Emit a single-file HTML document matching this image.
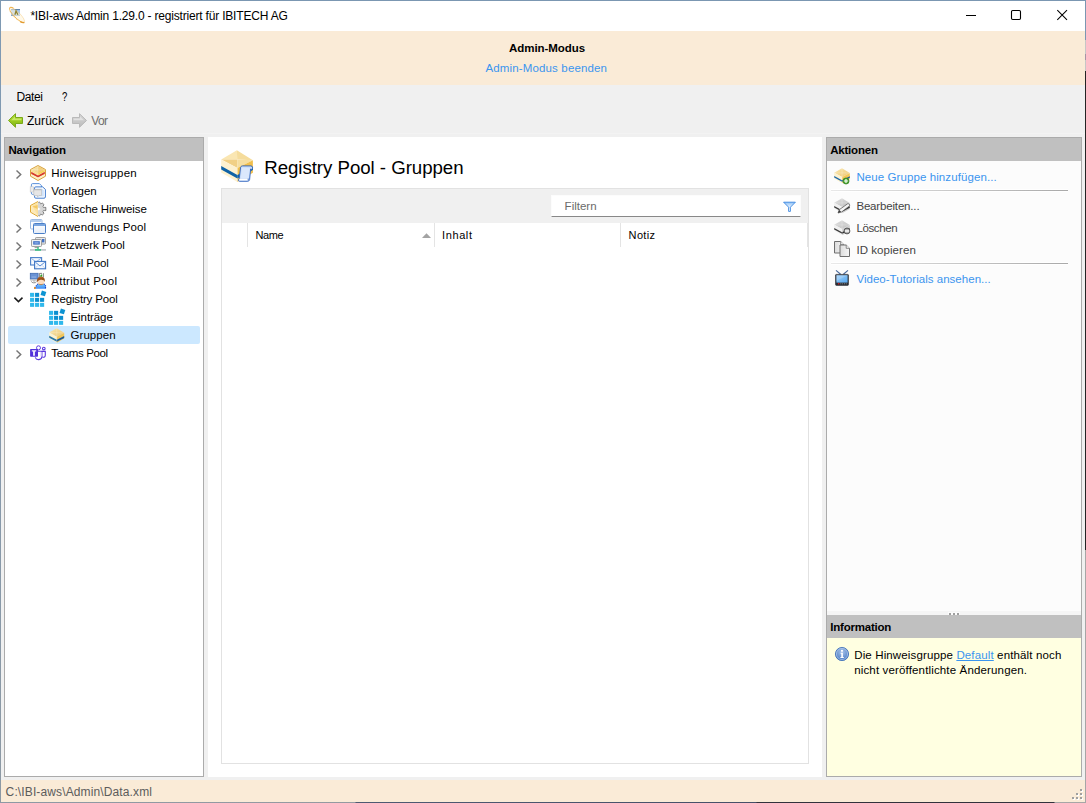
<!DOCTYPE html>
<html lang="de"><head><meta charset="utf-8"><title>IBI-aws Admin</title>
<style>
*{box-sizing:border-box;margin:0;padding:0}
html,body{width:1086px;height:803px;overflow:hidden;background:#f0f0f0}
body{font-family:"Liberation Sans",sans-serif;font-size:12px;color:#000;position:relative}
.abs{position:absolute}
.t{position:absolute;white-space:nowrap;line-height:14px;height:14px}
svg{position:absolute;overflow:visible}
.ph{position:absolute;height:23px;background:#c0c0c0}
</style></head><body>
<!-- window frame -->
<div class="abs" style="left:0;top:0;width:1086px;height:803px;background:#f0f0f0"></div>
<div class="abs" style="left:0;top:0;width:1086px;height:1px;background:#7b97b2"></div>
<div class="abs" style="left:0;top:0;width:1px;height:803px;background:linear-gradient(#7e99b3,#8799ab 60%,#8d99a4)"></div>
<div class="abs" style="left:1085px;top:0;width:1px;height:803px;background:linear-gradient(#7b97b2 0,#7b97b2 40px,#c6c6c6 40px,#c6c6c6 54px,#a694a6 54px,#a694a6 60px,#c6c6c6 60px,#c6c6c6 71px,#242424 71px,#242424 550px,#a6a6a6 550px)"></div>
<div class="abs" style="left:0;top:802px;width:1086px;height:1px;background:linear-gradient(90deg,#8d99a4 0,#949aa0 355px,#4e5a72 356px,#465068 756px,#32323c 757px,#32323c 1054px,#a6a6a6 1055px)"></div>
<!-- title bar -->
<div class="abs" style="left:1px;top:1px;width:1084px;height:30px;background:#fff"></div>
<svg width="0" height="0" style="left:0;top:0"><defs>
<linearGradient id="gTop" x1="0" y1="0" x2="1" y2="1"><stop offset="0" stop-color="#f9e6ae"/><stop offset="1" stop-color="#eec976"/></linearGradient>
<linearGradient id="gTopG" x1="0" y1="0" x2="1" y2="1"><stop offset="0" stop-color="#e0e0e0"/><stop offset="1" stop-color="#bebebe"/></linearGradient>
<linearGradient id="gGr" x1="0" y1="0" x2="0" y2="1"><stop offset="0" stop-color="#b4de3c"/><stop offset=".5" stop-color="#9ccc20"/><stop offset="1" stop-color="#7fb414"/></linearGradient>
<linearGradient id="gGy" x1="0" y1="0" x2="0" y2="1"><stop offset="0" stop-color="#d6d6d6"/><stop offset="1" stop-color="#bcbcbc"/></linearGradient>
<linearGradient id="gWin" x1="0" y1="0" x2="0" y2="1"><stop offset="0" stop-color="#ffffff"/><stop offset="1" stop-color="#e4ecf8"/></linearGradient>
<linearGradient id="gDoc" x1="0" y1="0" x2="1" y2="0"><stop offset="0" stop-color="#dcdcdc"/><stop offset="1" stop-color="#f6f6f6"/></linearGradient>
<radialGradient id="gInf" cx=".5" cy=".35" r=".7"><stop offset="0" stop-color="#a9c4ea"/><stop offset="1" stop-color="#3f74c0"/></radialGradient>
<linearGradient id="gTv" x1="0" y1="0" x2="1" y2="1"><stop offset="0" stop-color="#9fd0fb"/><stop offset="1" stop-color="#56a8f0"/></linearGradient>
</defs></svg><svg style="left:8px;top:6px" width="18" height="18" viewBox="0 0 18 18"><rect x="3" y="3" width="9" height="7" fill="#a8c9ee"/><rect x="3" y="3" width="9" height="1.1" fill="#5f86ae"/><rect x="3" y="9.2" width="9" height=".8" fill="#7fa6d0"/><g transform="rotate(45 9 9)"><ellipse cx="9" cy="9" rx="10.2" ry="3" fill="#fff4d8" fill-opacity=".55"/><ellipse cx="9" cy="9" rx="10.2" ry="3" fill="none" stroke="#f0b44c" stroke-width=".8" stroke-opacity=".4"/><path d="M-1.2 9A10.2 3 0 0 0 19.2 9" fill="none" stroke="#efb048" stroke-width="1" stroke-dasharray="1.1 .5"/><path d="M-1.2 9A10.2 3 0 0 1 2 6.7" fill="none" stroke="#efb048" stroke-width="1"/><path d="M19.2 9A10.2 3 0 0 1 16 11.3" fill="none" stroke="#e09a30" stroke-width="1.4"/></g><path d="M6.9 8.8L8 5L9.9 8.8" stroke="#85720f" stroke-opacity=".85" stroke-width="1.3" fill="none"/></svg>
<svg style="left:966px;top:10px" width="102" height="11" viewBox="0 0 102 11"><path d="M0 5.5h10" stroke="#000" stroke-width="1"/><rect x="45.5" y="0.5" width="9" height="9" rx="1.2" fill="none" stroke="#000" stroke-width="1.1"/><path d="M91.3 0.2l9.7 9.7M101 0.2l-9.7 9.7" stroke="#000" stroke-width="1.05"/></svg>
<!-- banner -->
<div class="abs" style="left:1px;top:31px;width:1084px;height:54px;background:#faebd7"></div>
<div class="abs" style="left:1px;top:133px;width:1084px;height:1px;background:#f3f3f3"></div>
<!-- toolbar arrows -->
<svg style="left:8px;top:113px" width="15" height="15" viewBox="0 0 15 15"><path d="M0.5 7.5L7.5 0.7V4.5H14.5V10.5H7.5V14.3Z" fill="url(#gGr)" stroke="#7aa81a" stroke-width="1" stroke-linejoin="round"/><path d="M3 7.2L7 3.6V5.6H13.4V7.2Z" fill="#d6f07a" fill-opacity=".75"/></svg><svg style="left:72px;top:113px" width="15" height="15" viewBox="0 0 15 15"><path d="M14.5 7.5L7.5 0.7V4.5H0.5V10.5H7.5V14.3Z" fill="url(#gGy)" stroke="#b9b9b9" stroke-width="1" stroke-linejoin="round"/><path d="M12 7.2L8 3.6V5.6H1.6V7.2Z" fill="#e6e6e6" fill-opacity=".8"/></svg>
<!-- nav panel -->
<div class="abs" style="left:4px;top:137px;width:200px;height:640px;border:1px solid #ababab;background:#fff"></div>
<div class="ph" style="left:5px;top:138px;width:198px"></div>
<div class="abs" style="left:8px;top:326px;width:192px;height:18px;background:#cce8ff;border-radius:2px"></div>
<svg style="left:16px;top:169px" width="6" height="10" viewBox="0 0 6 10"><path d="M0.5 1.5L4.7 5.5L0.5 9.5" fill="none" stroke="#757575" stroke-width="1.45"/></svg>
<svg style="left:16px;top:223px" width="6" height="10" viewBox="0 0 6 10"><path d="M0.5 1.5L4.7 5.5L0.5 9.5" fill="none" stroke="#757575" stroke-width="1.45"/></svg>
<svg style="left:16px;top:241px" width="6" height="10" viewBox="0 0 6 10"><path d="M0.5 1.5L4.7 5.5L0.5 9.5" fill="none" stroke="#757575" stroke-width="1.45"/></svg>
<svg style="left:16px;top:259px" width="6" height="10" viewBox="0 0 6 10"><path d="M0.5 1.5L4.7 5.5L0.5 9.5" fill="none" stroke="#757575" stroke-width="1.45"/></svg>
<svg style="left:16px;top:277px" width="6" height="10" viewBox="0 0 6 10"><path d="M0.5 1.5L4.7 5.5L0.5 9.5" fill="none" stroke="#757575" stroke-width="1.45"/></svg>
<svg style="left:16px;top:349px" width="6" height="10" viewBox="0 0 6 10"><path d="M0.5 1.5L4.7 5.5L0.5 9.5" fill="none" stroke="#757575" stroke-width="1.45"/></svg>
<svg style="left:14px;top:296px" width="10" height="6" viewBox="0 0 10 6"><path d="M0.4 1.6L4.45 5.6L8.5 1.6" fill="none" stroke="#1c1c1c" stroke-width="1.5"/></svg>
<svg style="left:30px;top:165px" width="16" height="16" viewBox="0 0 16 16"><path d="M8 0.5L15.5 4.5V11.2L8 15.5L0.5 11.2V4.5Z" fill="#fdf3d2"/><path d="M8 1.2L14.8 4.8L8 8.4L1.2 4.8Z" fill="url(#gTop)"/><path d="M1.2 4.8L8 8.4V10L1.2 6.6Z" fill="#fae08e"/><path d="M14.8 4.8L8 8.4V10L14.8 6.6Z" fill="#f7d24e"/><path d="M1.2 6.8L8 10.4L14.8 6.8V9L8 12.6L1.2 9Z" fill="#d63b2a"/><path d="M1.2 9.2L8 12.8L14.8 9.2V11L8 14.8L1.2 11Z" fill="#fdf0c4"/><path d="M8 1.2V8.4M1.2 4.8H14.8" stroke="#fff" stroke-opacity=".4" stroke-width=".7"/><path d="M8 1.2L14.8 4.8L8 8.4Z" fill="#f0b030" fill-opacity=".25"/><path d="M8 0.5L15.5 4.5V11.2L8 15.5L0.5 11.2V4.5Z" fill="none" stroke="#d8a33e" stroke-width="1"/></svg>
<svg style="left:30px;top:183px" width="16" height="16" viewBox="0 0 16 16"><path d="M2.6 0.6H9.4L11.6 2.8V11.4H2.6C1.8 11.4 1.4 11 1.4 10.2V1.8C1.4 1 1.8 0.6 2.6 0.6Z" fill="#f8fbff" stroke="#4a86d6" stroke-width=".9"/><path d="M5.6 3.9H12.6L15.4 6.4V14C15.4 14.8 14.8 15.2 14 15.2H5.8C5 15.2 4.6 14.8 4.6 14V5C4.6 4.2 5 3.9 5.6 3.9Z" fill="#fdfeff" stroke="#3a76cc" stroke-width=".95"/><path d="M6.4 5.6H12L13.8 7.2V13.6H6.4Z" fill="#cfe3fb"/><rect x="0.2" y="3.8" width="3.4" height="5.2" fill="#ececec" stroke="#c6c6c6" stroke-width=".6"/><path d="M3.7 6.6H11.5V12.5H8.8L7.5 14.2V12.5H3.7Z" fill="#e6e6e6" stroke="#bcbcbc" stroke-width=".6"/><path d="M3.7 6.7H11.5" stroke="#b0b0b0" stroke-width=".7"/></svg>
<svg style="left:30px;top:201px" width="16" height="16" viewBox="0 0 16 16"><g fill="#d0d0d0" stroke="#5c5c5c" stroke-width=".8" stroke-linejoin="round"><path d="M8 1.6L9.6 1L10.4 3.2L12.2 2L14 3.6L12.8 5.6C13 6 13.2 6.2 13.2 6.4H15.8V9.6H13.2C13.2 9.8 13 10 12.8 10.4L14 12.4L12.2 14L10.4 12.8L9.6 15L8 14.4Z"/></g><path d="M8 1.6L9.4 1.2L10.2 3.6L12 2.4L13.4 3.6L12.2 5.8L12.8 6.8H15.2V9.2H12.8L12.2 10.2L13.4 12.4L12 13.6L10.2 12.4L9.4 14.8L8 14.4Z" fill="#d6d6d6"/><path d="M8 6.4L10.6 8L8 9.6Z" fill="#fff"/><path d="M8 0.5V15.5L0.5 11.2V4.5Z" fill="#fdf0c8"/><path d="M8 0.5L0.5 4.5V11.2L8 15.5" fill="none" stroke="#dfa832" stroke-width="1" stroke-linejoin="round"/><path d="M7.6 1.6V8.4L1.6 5Z" fill="#fbe2a0"/><path d="M7.6 4V14L2.6 5.4Z" fill="#f3c458" fill-opacity=".85"/><path d="M7.6 8V14.6L1.4 11V5.2Z" fill="#fce8b4" fill-opacity=".75"/></svg>
<svg style="left:30px;top:219px" width="16" height="16" viewBox="0 0 16 16"><rect x="0.5" y="0.5" width="11.5" height="9.5" rx="1" fill="#fbfcfe" stroke="#9dbbe2"/><rect x="1" y="1" width="10.5" height="2" fill="#b4cdee"/><rect x="3.5" y="4.5" width="12" height="10" rx="1" fill="url(#gWin)" stroke="#4a7fc8"/><rect x="4" y="5" width="11" height="2" fill="#7aa6e0"/></svg>
<svg style="left:30px;top:237px" width="16" height="16" viewBox="0 0 16 16"><rect x="5.5" y="0.5" width="10" height="6.6" rx=".8" fill="#e8e8e8" stroke="#8c8c8c" stroke-width=".8"/><rect x="12" y="2" width="2.4" height="3.4" fill="#3f6fc4"/><rect x="1.5" y="2.5" width="10" height="7" rx=".8" fill="#f2f2f2" stroke="#8c8c8c" stroke-width=".8"/><rect x="3.2" y="4.2" width="6.6" height="3.4" fill="#3f6fc4"/><rect x="4.4" y="5" width="4.2" height="1.8" fill="#7ea0e0"/><path d="M4.6 10.6H8.6" stroke="#9a9a9a" stroke-width="1"/><rect x="0" y="12" width="16" height="1.8" fill="#c4c8cc"/><rect x="5" y="12" width="6" height="1.8" fill="#3fbf86"/><path d="M8 10V12" stroke="#3fbf86" stroke-width="1.4"/></svg>
<svg style="left:30px;top:255px" width="16" height="16" viewBox="0 0 16 16"><rect x="0.6" y="2.6" width="11" height="7.4" fill="#f6f9fe" stroke="#4a7fc8" stroke-width="1.1"/><path d="M1.4 3.4L6 7L10.8 3.4" fill="none" stroke="#7fa6de" stroke-width=".9"/><rect x="4.6" y="6.4" width="11" height="7.4" fill="#f6f9fe" stroke="#3f76c4" stroke-width="1.1"/><path d="M5.4 7.2L10 11L14.8 7.2" fill="none" stroke="#5b8ed6" stroke-width="1"/><path d="M5.4 13L8 10.4M14.8 13L12.2 10.4" stroke="#a9c4ea" stroke-width=".7"/></svg>
<svg style="left:30px;top:273px" width="16" height="16" viewBox="0 0 16 16"><rect x="0.3" y="0.3" width="7.8" height="5.8" fill="#6a92d4" stroke="#3f6ab0" stroke-width=".8"/><rect x="1.6" y="3.7" width="4.6" height=".7" fill="#a9c2ea"/><rect x="0.2" y="6.5" width="7" height="1.3" fill="#cfcfcf"/><path d="M1.4 8.4C1.4 10.2 6 10.4 6.6 8.6" fill="none" stroke="#8c8c8c" stroke-width="1"/><path d="M3 8H5.4" stroke="#b0b0b0" stroke-width="1"/><path d="M9.6 0.2V4.4M13.4 0.2V4.4M9.6 0.4H12" stroke="#7a7a7a" stroke-width=".9" fill="none"/><path d="M10.5 3.6V2.6L12 1.6V3.6Z" fill="#2aa02a" stroke="#2aa02a" stroke-width=".5"/><defs><linearGradient id="gBody" x1="0" y1="0" x2="0" y2="1"><stop offset="0" stop-color="#76c6ff"/><stop offset="1" stop-color="#3c8af4"/></linearGradient></defs><path d="M7.6 11L5.4 14V15.8H16V13.2L14.2 11Z" fill="url(#gBody)"/><path d="M7.8 10.8L5.2 14.2V15.8M14 10.8L15.5 12.8V15.8" fill="none" stroke="#1c40c4" stroke-width="1.2" stroke-dasharray="1.1 .8"/><ellipse cx="10.9" cy="8.7" rx="3.2" ry="2.9" fill="#fbdcc0"/><path d="M7.2 9.4C6.4 5 8.6 3.7 11 3.7S15.6 5 14.6 9.4C14.4 7.4 13.4 6.8 12.2 7C10.6 6.2 8 7 7.2 9.4Z" fill="#9a521a"/><path d="M8 5.2C9.4 3.8 12.6 3.8 14 5.2C12.4 4.8 9.6 4.8 8 5.2Z" fill="#b8682a"/><path d="M8.6 10.8C9.8 12 12.2 12 13.4 10.8" fill="none" stroke="#b87840" stroke-width=".9"/><rect x="4" y="13.9" width="1.7" height="2" rx=".4" fill="#ea8a1e"/></svg>
<svg style="left:30px;top:291px" width="16" height="16" viewBox="0 0 16 16"><rect x="0.05" y="1.85" width="4.1" height="4.0" fill="#2fb8ec"/><rect x="5.05" y="1.85" width="4.1" height="4.0" fill="#0a8fd0"/><rect x="0.05" y="6.85" width="4.1" height="4.0" fill="#2fb8ec"/><rect x="5.05" y="6.85" width="4.1" height="4.0" fill="#0a8fd0"/><rect x="10.05" y="6.85" width="4.1" height="4.0" fill="#0a8fd0"/><rect x="0.05" y="11.85" width="4.1" height="4.0" fill="#2fb8ec"/><rect x="5.05" y="11.85" width="4.1" height="4.0" fill="#2fb8ec"/><rect x="10.05" y="11.85" width="4.1" height="4.0" fill="#2fb8ec"/><rect x="11.1" y="0.1" width="4.6" height="4.6" fill="#0c93d2" transform="rotate(18 13.4 2.4)"/></svg>
<svg style="left:49px;top:309px" width="16" height="16" viewBox="0 0 16 16"><rect x="0.05" y="1.85" width="4.1" height="4.0" fill="#2fb8ec"/><rect x="5.05" y="1.85" width="4.1" height="4.0" fill="#0a8fd0"/><rect x="0.05" y="6.85" width="4.1" height="4.0" fill="#2fb8ec"/><rect x="5.05" y="6.85" width="4.1" height="4.0" fill="#0a8fd0"/><rect x="10.05" y="6.85" width="4.1" height="4.0" fill="#0a8fd0"/><rect x="0.05" y="11.85" width="4.1" height="4.0" fill="#2fb8ec"/><rect x="5.05" y="11.85" width="4.1" height="4.0" fill="#2fb8ec"/><rect x="10.05" y="11.85" width="4.1" height="4.0" fill="#2fb8ec"/><rect x="11.1" y="0.1" width="4.6" height="4.6" fill="#0c93d2" transform="rotate(18 13.4 2.4)"/></svg>
<svg style="left:48.8px;top:327.7px" width="15.4" height="15.4" viewBox="0 0 16 16"><path d="M8 0.2L15.8 5L8.1 9L0.2 4.8Z" fill="url(#gTop)"/><path d="M0.2 4.8L8.1 9V15.3L0.2 10.6Z" fill="#fdf2d0"/><path d="M15.8 5L8.1 9V15.3L15.8 10.9Z" fill="#f2c658"/><path d="M0.2 8.1L8.1 12.2V14.299999999999999L0.2 10.1Z" fill="#2a78a8"/><path d="M15.8 8.3L8.1 12.2V14.299999999999999L15.8 10.3Z" fill="#185a9a"/><path d="M8 0.2L8.1 9M0.2 4.8L15.8 5" stroke="#fff" stroke-opacity=".3" stroke-width=".7"/><path d="M8.1 9V15.3" stroke="#fff" stroke-opacity=".35" stroke-width=".6"/></svg>
<svg style="left:30px;top:345px" width="16" height="16" viewBox="0 0 16 16"><circle cx="8.5" cy="2.8" r="2" fill="#fff" stroke="#5a38de" stroke-width=".95"/><circle cx="13.8" cy="3.5" r="1.35" fill="#fff" stroke="#5a38de" stroke-width="1.05"/><path d="M12 6.4H15.3V10.2C15.3 12.6 12.8 12.6 12.4 11.8" fill="none" stroke="#5a38de" stroke-width="1.1"/><path d="M8 6.3H11.9V11.6C11.9 15.4 6.2 15.6 5.3 12.4" fill="#fff" stroke="#5a38de" stroke-width="1.1"/><path d="M11.2 7V11.4" stroke="#cfc6f6" stroke-width="1.2"/><rect x="0.1" y="4.1" width="7.9" height="7.7" rx=".7" fill="#5230da"/><path d="M1.8 5.2H6.2V6.5H4.9V10.7H3.1V6.5H1.8Z" fill="#f4f2fd"/></svg>
<!-- center -->
<div class="abs" style="left:208px;top:137px;width:614px;height:640px;background:#fff"></div>
<svg style="left:221px;top:150px" width="32" height="32" viewBox="0 0 32 32"><path d="M15.9 0.2L0.2 9.45L16.2 9.6Z" fill="#fae6b2"/><path d="M15.9 0.2L31.9 10.2L16.2 9.6Z" fill="#f5dc9c"/><path d="M0.2 9.45L16.4 17.9L16.2 9.6Z" fill="#f1d086"/><path d="M31.9 10.2L16.4 17.9L16.2 9.6Z" fill="#f6dea0"/><path d="M0.2 9.45L16.4 17.9V31.9L0.2 22.6Z" fill="#fdf1d0"/><path d="M31.9 10.2L16.4 17.9V31.9L31.9 22.8Z" fill="#f1bf4c"/><path d="M0.2 15.9L16.4 24.9L31.9 16.6V20L16.4 28.4L0.2 19.4Z" fill="#0f62a6"/><path d="M16.4 17.9V31.9" stroke="#fff" stroke-opacity=".25" stroke-width=".8"/><path d="M19.6 17.2C20 16.2 21 15.9 22 15.9H30C31.6 16 32.2 18.4 30.6 19.4L29.6 19L28.6 29.6C28.4 30.8 27.4 31.3 26.8 31.3H18.4C17 31 17 29.4 18.2 28.8Z" fill="#c6dbf8" stroke="#2f62bc" stroke-width=".9"/><path d="M20.8 17.6L28.8 17.8L27.6 28.4H19.8Z" fill="#dbe8fc"/><path d="M18.6 29.6H27" stroke="#fff" stroke-width="1.5"/><path d="M27.2 28.6V30.6" stroke="#2f62bc" stroke-width=".8"/></svg>
<div class="abs" style="left:221px;top:188px;width:588px;height:576px;border:1px solid #e2e2e2;background:#fff"></div>
<div class="abs" style="left:222px;top:189px;width:586px;height:34px;background:#f0f0f0"></div>
<div class="abs" style="left:551px;top:195px;width:250px;height:22px;background:#fff;border:1px solid #fcfcfc;border-bottom:1px solid #888888;border-radius:1px"></div>
<svg style="left:783px;top:201.4px" width="13" height="11" viewBox="0 0 13 11"><defs><linearGradient id="gFu" x1="0" y1="0" x2="0" y2="1"><stop offset="0" stop-color="#8cc0f6"/><stop offset=".45" stop-color="#dcecfd"/><stop offset="1" stop-color="#ffffff"/></linearGradient></defs><path d="M0.6 1.2h11.8l-5 5v4.2h-1.8v-4.2z" fill="url(#gFu)" stroke="#3a86e0" stroke-width=".9" stroke-linejoin="round"/></svg>
<div class="abs" style="left:247px;top:223px;width:1px;height:24px;background:#e4e4e4"></div>
<div class="abs" style="left:434px;top:223px;width:1px;height:24px;background:#e4e4e4"></div>
<div class="abs" style="left:620px;top:223px;width:1px;height:24px;background:#e4e4e4"></div>
<div class="abs" style="left:807px;top:223px;width:1px;height:24px;background:#e4e4e4"></div>
<svg style="left:422px;top:233px" width="9" height="5" viewBox="0 0 9 5"><path d="M0 5L4.5 0.3L9 5z" fill="#a3a3a3"/></svg>
<!-- right panel -->
<div class="abs" style="left:826px;top:137px;width:256px;height:640px;border:1px solid #ababab;background:#f0f0f0"></div>
<div class="ph" style="left:827px;top:138px;width:254px"></div>
<div class="abs" style="left:827px;top:161px;width:254px;height:450px;background:#fcfcfc"></div>
<div class="abs" style="left:831px;top:189px;width:237px;height:3px;background:#fff"></div><div class="abs" style="left:831px;top:190px;width:237px;height:1px;background:linear-gradient(90deg,#e9e9e9,#a9a9a9)"></div>
<div class="abs" style="left:831px;top:262px;width:237px;height:3px;background:#fff"></div><div class="abs" style="left:831px;top:263px;width:237px;height:1px;background:linear-gradient(90deg,#e9e9e9,#a9a9a9)"></div>
<div class="abs" style="left:827px;top:611px;width:254px;height:4px;background:#f5f5f5"></div><div class="abs" style="left:948px;top:612px;width:12px;height:3px;background:#fcfcfc"></div><div class="abs" style="left:949px;top:613px;width:2px;height:2px;background:#a0a0a0;box-shadow:4px 0 #a0a0a0,8px 0 #a0a0a0"></div>
<div class="ph" style="left:827px;top:615px;width:254px"></div>
<div class="abs" style="left:827px;top:638px;width:254px;height:138px;background:#ffffe1"></div>
<svg style="left:834px;top:168.2px" width="16" height="16" viewBox="0 0 16 16"><path d="M8 0.2L15.8 5L8.1 9L0.2 4.8Z" fill="url(#gTop)"/><path d="M0.2 4.8L8.1 9V15.3L0.2 10.6Z" fill="#fdf2d0"/><path d="M15.8 5L8.1 9V15.3L15.8 10.9Z" fill="#f2c658"/><path d="M0.2 8.1L8.1 12.2V13.7L0.2 9.5Z" fill="#1c66a8"/><path d="M15.8 8.3L8.1 12.2V13.7L15.8 9.700000000000001Z" fill="#185a9a"/><path d="M8 0.2L8.1 9M0.2 4.8L15.8 5" stroke="#fff" stroke-opacity=".3" stroke-width=".7"/><path d="M8.1 9V15.3" stroke="#fff" stroke-opacity=".35" stroke-width=".6"/></svg>
<svg style="left:842px;top:177px" width="8" height="8" viewBox="0 0 8 8"><circle cx="4" cy="4" r="3.05" fill="#4aa62e" stroke="#2f7c1c" stroke-width=".7"/><path d="M4 1.9V6.1M1.9 4H6.1" stroke="#fff" stroke-width="1.15"/></svg>
<svg style="left:834px;top:197.6px" width="16" height="16" viewBox="0 0 16 16"><path d="M8 0.2L15.8 5L8.1 9L0.2 4.8Z" fill="url(#gTopG)"/><path d="M0.2 4.8L8.1 9V15.3L0.2 10.6Z" fill="#f0f0f0"/><path d="M15.8 5L8.1 9V15.3L15.8 10.9Z" fill="#cdcdcd"/><path d="M0.2 8.1L8.1 12.2V13.7L0.2 9.5Z" fill="#3c3c3c"/><path d="M15.8 8.3L8.1 12.2V13.7L15.8 9.700000000000001Z" fill="#2c2c2c"/><path d="M8 0.2L8.1 9M0.2 4.8L15.8 5" stroke="#fff" stroke-opacity=".3" stroke-width=".7"/><path d="M8.1 9V15.3" stroke="#fff" stroke-opacity=".35" stroke-width=".6"/></svg>
<svg style="left:837px;top:203px" width="14" height="11" viewBox="0 0 14 11"><path d="M1 10L2.4 6.6L10.6 0.8C11.6 0.2 13.4 1.8 12.6 2.8L4.6 9Z" fill="#f4f4f4" stroke="#5a5a5a" stroke-width=".8" stroke-linejoin="round"/><path d="M1 10L2.2 7L4.2 8.8Z" fill="#3a3a3a"/></svg>
<svg style="left:834px;top:219.6px" width="16" height="16" viewBox="0 0 16 16"><path d="M8 0.2L15.8 5L8.1 9L0.2 4.8Z" fill="url(#gTopG)"/><path d="M0.2 4.8L8.1 9V15.3L0.2 10.6Z" fill="#f0f0f0"/><path d="M15.8 5L8.1 9V15.3L15.8 10.9Z" fill="#cdcdcd"/><path d="M0.2 8.1L8.1 12.2V13.7L0.2 9.5Z" fill="#3c3c3c"/><path d="M15.8 8.3L8.1 12.2V13.7L15.8 9.700000000000001Z" fill="#2c2c2c"/><path d="M8 0.2L8.1 9M0.2 4.8L15.8 5" stroke="#fff" stroke-opacity=".3" stroke-width=".7"/><path d="M8.1 9V15.3" stroke="#fff" stroke-opacity=".35" stroke-width=".6"/></svg>
<svg style="left:842.6px;top:227.4px" width="8" height="8" viewBox="0 0 8 8"><circle cx="4" cy="4" r="2.9" fill="#b4b4b4" stroke="#474747" stroke-width=".9"/><rect x="1.9" y="3.3" width="4.2" height="1.4" fill="#fff"/></svg>
<svg style="left:834px;top:241px" width="16" height="16" viewBox="0 0 16 16"><path d="M0.5 0.5h6.2l3.3 3.3v8.2h-9.5z" fill="url(#gDoc)" stroke="#6e6e6e" stroke-width="1" stroke-linejoin="round"/><path d="M6.7 0.5v3.3h3.3" fill="#f8f8f8" stroke="#6e6e6e" stroke-width=".8"/><path d="M6 4h6.2l3.3 3.3v8.2h-9.5z" fill="url(#gDoc)" stroke="#6e6e6e" stroke-width="1" stroke-linejoin="round"/><path d="M12.2 4v3.3h3.3" fill="#f8f8f8" stroke="#6e6e6e" stroke-width=".8"/></svg>
<svg style="left:835px;top:270px" width="14" height="16" viewBox="0 0 14 16"><path d="M1 0.4L5.6 4.2M13 0.4L8.4 4.2" stroke="#4a6a9c" stroke-width="1.2"/><rect x="0.5" y="4.4" width="13" height="11" rx=".8" fill="#2a2e36" stroke="#2a2e36" stroke-width=".6"/><rect x="1.4" y="5.2" width="11.2" height="7.4" fill="url(#gTv)"/><path d="M1.4 5.2H12.6L1.4 11Z" fill="#fff" fill-opacity=".18"/><rect x="3" y="13.2" width="1.4" height="1.2" fill="#f01818"/><path d="M5.4 13.8H12" stroke="#9a9a9a" stroke-width=".9" stroke-dasharray=".9 .9"/></svg>
<svg style="left:835px;top:647px" width="14" height="14" viewBox="0 0 14 14"><circle cx="7" cy="7" r="6.6" fill="url(#gInf)" stroke="#3a6cb8" stroke-width=".8"/><circle cx="7" cy="7" r="5.6" fill="none" stroke="#c4d6f0" stroke-opacity=".7" stroke-width=".8"/><circle cx="7" cy="3.8" r="1.1" fill="#fff"/><path d="M5.6 5.8H7.9V10H8.8V11H5.4V10H6.3V6.8H5.6Z" fill="#fff"/></svg>
<!-- status bar -->
<div class="abs" style="left:1px;top:780px;width:1084px;height:22px;background:#faebd7"></div>
<svg style="left:1072px;top:789px" width="11" height="11" viewBox="0 0 11 11"><g fill="#fff"><rect x="9" y="1" width="2" height="2"/><rect x="5" y="5" width="2" height="2"/><rect x="9" y="5" width="2" height="2"/><rect x="1" y="9" width="2" height="2"/><rect x="5" y="9" width="2" height="2"/><rect x="9" y="9" width="2" height="2"/></g><g fill="#a0a0a0"><rect x="8" y="0" width="2" height="2"/><rect x="4" y="4" width="2" height="2"/><rect x="8" y="4" width="2" height="2"/><rect x="0" y="8" width="2" height="2"/><rect x="4" y="8" width="2" height="2"/><rect x="8" y="8" width="2" height="2"/></g></svg>
<!-- texts -->
<div class="t" id="ttl" style="left:30.4px;top:9px;letter-spacing:-0.191px;">*IBI-aws Admin 1.29.0 - registriert für IBITECH AG</div>
<div class="t" id="am1" style="left:509px;top:41px;font-size:11.5px;letter-spacing:-0.046px;font-weight:bold">Admin-Modus</div>
<div class="t" id="am2" style="left:485.5px;top:61px;font-size:11.5px;letter-spacing:0.143px;color:#3b95ef">Admin-Modus beenden</div>
<div class="t" id="mdatei" style="left:16.5px;top:90px;letter-spacing:-0.429px;">Datei</div>
<div class="t" id="mq" style="left:61.8px;top:90px;transform:scaleX(.8);transform-origin:0 0">?</div>
<div class="t" id="zur" style="left:27px;top:114px;letter-spacing:0.042px;">Zurück</div>
<div class="t" id="vor" style="left:91.2px;top:114px;letter-spacing:-0.608px;color:#6d6d6d">Vor</div>
<div class="t" id="navh" style="left:8.4px;top:143px;font-size:11.5px;letter-spacing:-0.133px;font-weight:bold">Navigation</div>
<div class="t" id="n0" style="left:51.3px;top:166px;font-size:11.5px;letter-spacing:0.225px;">Hinweisgruppen</div>
<div class="t" id="n1" style="left:51.3px;top:184px;font-size:11.5px;letter-spacing:-0.001px;">Vorlagen</div>
<div class="t" id="n2" style="left:51.3px;top:202px;font-size:11.5px;letter-spacing:-0.097px;">Statische Hinweise</div>
<div class="t" id="n3" style="left:51.3px;top:220px;font-size:11.5px;letter-spacing:0.149px;">Anwendungs Pool</div>
<div class="t" id="n4" style="left:51.3px;top:238px;font-size:11.5px;letter-spacing:-0.053px;">Netzwerk Pool</div>
<div class="t" id="n5" style="left:51.3px;top:256px;font-size:11.5px;letter-spacing:-0.121px;">E-Mail Pool</div>
<div class="t" id="n6" style="left:51.3px;top:274px;font-size:11.5px;letter-spacing:0.254px;">Attribut Pool</div>
<div class="t" id="n7" style="left:51.3px;top:292px;font-size:11.5px;letter-spacing:-0.158px;">Registry Pool</div>
<div class="t" id="n8" style="left:70.5px;top:310px;font-size:11.5px;letter-spacing:-0.078px;">Einträge</div>
<div class="t" id="n9" style="left:70.5px;top:328px;font-size:11.5px;letter-spacing:0.056px;">Gruppen</div>
<div class="t" id="n10" style="left:51.3px;top:346px;font-size:11.5px;letter-spacing:-0.366px;">Teams Pool</div>
<div class="t" id="h1" style="left:264.2px;top:157px;font-size:18.67px;letter-spacing:-0.034px;line-height:22px;height:22px">Registry Pool - Gruppen</div>
<div class="t" id="flt" style="left:564.6px;top:199px;font-size:11.5px;letter-spacing:0.008px;color:#6a6a6a">Filtern</div>
<div class="t" id="c1" style="left:255.5px;top:228px;font-size:11px;letter-spacing:-0.381px;">Name</div>
<div class="t" id="c2" style="left:442px;top:228px;font-size:11px;letter-spacing:0.616px;">Inhalt</div>
<div class="t" id="c3" style="left:628.6px;top:228px;font-size:11px;letter-spacing:0.359px;">Notiz</div>
<div class="t" id="acth" style="left:830.2px;top:143px;font-size:11.5px;letter-spacing:-0.200px;font-weight:bold">Aktionen</div>
<div class="t" id="a1" style="left:856.4px;top:170px;font-size:11.5px;letter-spacing:0.091px;color:#3b95ef">Neue Gruppe hinzufügen...</div>
<div class="t" id="a2" style="left:856.4px;top:199px;font-size:11.5px;letter-spacing:-0.168px;color:#444">Bearbeiten...</div>
<div class="t" id="a3" style="left:856.4px;top:221px;font-size:11.5px;letter-spacing:-0.381px;color:#444">Löschen</div>
<div class="t" id="a4" style="left:856.4px;top:243px;font-size:11.5px;letter-spacing:0.059px;color:#444">ID kopieren</div>
<div class="t" id="a5" style="left:856.4px;top:272px;font-size:11.5px;letter-spacing:0.028px;color:#3b95ef">Video-Tutorials ansehen...</div>
<div class="t" id="infh" style="left:830.3px;top:620px;font-size:11.5px;letter-spacing:-0.215px;font-weight:bold">Information</div>
<div class="t" id="i1" style="left:854.2px;top:648px;font-size:11.5px;letter-spacing:0.137px;">Die Hinweisgruppe <span id="dfl" style="color:#3b95ef;text-decoration:underline">Default</span> enthält noch</div>
<div class="t" id="i2" style="left:854.2px;top:663px;font-size:11.5px;letter-spacing:0.152px;">nicht veröffentlichte Änderungen.</div>
<div class="t" id="stt" style="left:5.6px;top:785px;letter-spacing:0.126px;color:#5c5c5c">C:\IBI-aws\Admin\Data.xml</div>
</body></html>
